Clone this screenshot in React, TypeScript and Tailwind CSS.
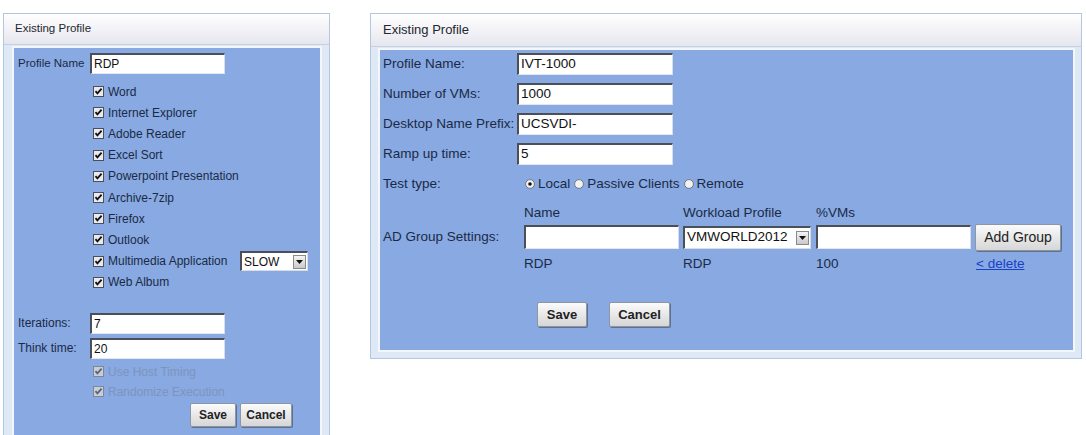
import React from "react";

const font = { fontFamily: '"Liberation Sans", Arial, sans-serif' };

function Check({ disabled }: { disabled?: boolean }) {
    return (
        <svg width="11" height="11" viewBox="0 0 11 11" className="shrink-0">
            <rect x="0.5" y="0.5" width="10" height="10" fill={disabled ? "#c9cdd6" : "#e9e9ee"} stroke={disabled ? "#7d879c" : "#4a4f5a"} />
            <path d="M2.5 5.2 L4.4 7.4 L8.6 2.6" fill="none" stroke={disabled ? "#5d6475" : "#111"} strokeWidth="1.8" />
        </svg>
    );
}

function Radio({ on }: { on?: boolean }) {
    return (
        <svg width="10" height="10" viewBox="0 0 10 10" className="shrink-0">
            <circle cx="5" cy="5" r="4.4" fill="#f2f2f2" stroke="#6b6f78" strokeWidth="0.9" />
            {on && <circle cx="5" cy="5" r="1.8" fill="#111" />}
        </svg>
    );
}

function TextBox({ value, className }: { value?: string; className: string }) {
    return (
        <div className={`bg-white border-t-2 border-l-2 border-r border-b border-t-[#4b4f58] border-l-[#4b4f58] border-r-[#d8dce4] border-b-[#e4e8ee] flex items-center pl-[2px] text-[#111] ${className}`}>
            {value}
        </div>
    );
}

function Select({ value, className }: { value: string; className: string }) {
    return (
        <div className={`bg-white border-t-2 border-l-2 border-r border-b border-t-[#4b4f58] border-l-[#4b4f58] border-r-[#d8dce4] border-b-[#d8dce4] flex items-center justify-between pl-[2px] pr-[1px] text-[#111] ${className}`}>
            <span>{value}</span>
            <span className="w-[13px] h-[14px] bg-gradient-to-b from-[#f4f4f4] to-[#c9c9c9] border border-[#8a8a8a] flex items-center justify-center">
                <svg width="7" height="4" viewBox="0 0 7 4"><path d="M0 0 H7 L3.5 4 Z" fill="#111" /></svg>
            </span>
        </div>
    );
}

function Button({ label, className }: { label: string; className: string }) {
    return (
        <div className={`bg-gradient-to-b from-[#fbfbfb] to-[#d6d6d6] border border-[#8f96a3] rounded-[2px] flex items-center justify-center text-[#222] shadow-[1px_1px_0_#5f6f90] ${className}`}>
            {label}
        </div>
    );
}

const leftItems = [
    "Word",
    "Internet Explorer",
    "Adobe Reader",
    "Excel Sort",
    "Powerpoint Presentation",
    "Archive-7zip",
    "Firefox",
    "Outlook",
    "Multimedia Application",
    "Web Album",
];

export default function App() {
    return (
        <div className="w-[1086px] h-[435px] bg-white overflow-hidden flex items-start pt-[13px] pl-[3px]" style={font}>
            {/* left panel */}
            <div className="w-[327px] h-[430px] border border-[#b3c6e2] bg-[#dfe8f5] flex flex-col">
                <div className="h-[31px] shrink-0 bg-gradient-to-b from-white to-[#e6e6ef] border-b border-[#c7cfe0] flex items-center pl-[11px] text-[11.5px] text-[#23272f]">
                    Existing Profile
                </div>
                <div className="mt-[1px] ml-[8px] mr-[7px] flex-1 border-2 border-[#f3f6fb] bg-[#88a9e1] text-[12px] text-[#1b2947] pl-[4px] pt-[5px]">
                    <div className="flex items-center h-[21px]">
                        <span className="w-[72px] text-[11.5px]">Profile Name</span>
                        <TextBox value="RDP" className="w-[135px] h-[21px] text-[12px]" />
                    </div>
                    <div className="mt-[7px] flex flex-col">
                        {leftItems.map((item) => (
                            <div key={item} className="h-[21.2px] flex items-center pl-[75px] gap-[4px]">
                                <Check />
                                <span className="w-[128px] whitespace-nowrap">{item}</span>
                                {item === "Multimedia Application" && (
                                    <Select value="SLOW" className="w-[68px] h-[20px] text-[12px]" />
                                )}
                            </div>
                        ))}
                    </div>
                    <div className="mt-[20px] flex items-center h-[21px]">
                        <span className="w-[72px]">Iterations:</span>
                        <TextBox value="7" className="w-[135px] h-[21px] text-[12px]" />
                    </div>
                    <div className="mt-[4px] flex items-center h-[21px]">
                        <span className="w-[72px]">Think time:</span>
                        <TextBox value="20" className="w-[135px] h-[21px] text-[12px]" />
                    </div>
                    <div className="mt-[3px] h-[20px] flex items-center pl-[75px] gap-[4px] text-[#7f93bd]">
                        <Check disabled />
                        <span>Use Host Timing</span>
                    </div>
                    <div className="h-[20px] flex items-center pl-[75px] gap-[4px] text-[#7f93bd]">
                        <Check disabled />
                        <span>Randomize Execution</span>
                    </div>
                    <div className="mt-[1px] flex pl-[172px] gap-[4px]">
                        <Button label="Save" className="w-[46px] h-[24px] text-[12px] font-bold" />
                        <Button label="Cancel" className="w-[52px] h-[24px] text-[12px] font-bold" />
                    </div>
                </div>
            </div>

            {/* right panel */}
            <div className="ml-[40px] w-[712px] h-[346px] border border-[#b3c6e2] bg-[#dfe8f5] flex flex-col">
                <div className="h-[33px] shrink-0 bg-gradient-to-b from-white to-[#e6e6ef] border-b border-[#c7cfe0] flex items-center pl-[12px] text-[13px] text-[#23272f]">
                    Existing Profile
                </div>
                <div className="mt-[1px] ml-[7px] mr-[6px] mb-[6px] flex-1 border-2 border-[#f3f6fb] bg-[#88a9e1] text-[13.5px] text-[#1b2947] pl-[3px] pt-[3px]">
                    {[
                        ["Profile Name:", "IVT-1000"],
                        ["Number of VMs:", "1000"],
                        ["Desktop Name Prefix:", "UCSVDI-"],
                        ["Ramp up time:", "5"],
                    ].map(([label, value], i) => (
                        <div key={label} className={`flex items-center h-[22px] ${i > 0 ? "mt-[8px]" : ""}`}>
                            <span className="w-[134px] whitespace-nowrap">{label}</span>
                            <TextBox value={value} className="w-[156px] h-[22px] text-[13.5px]" />
                        </div>
                    ))}
                    <div className="mt-[8px] flex items-center h-[22px] whitespace-nowrap">
                        <span className="w-[142px]">Test type:</span>
                        <span className="flex items-center gap-[3px]"><Radio on />Local</span>
                        <span className="flex items-center gap-[3px] ml-[4px]"><Radio />Passive Clients</span>
                        <span className="flex items-center gap-[3px] ml-[4px]"><Radio />Remote</span>
                    </div>
                    <div className="mt-[8px] flex items-center h-[20px]">
                        <span className="w-[141px]"></span>
                        <span className="w-[159px]">Name</span>
                        <span className="w-[133px]">Workload Profile</span>
                        <span>%VMs</span>
                    </div>
                    <div className="flex items-center h-[28px]">
                        <span className="w-[141px]">AD Group Settings:</span>
                        <TextBox className="w-[155px] h-[24px]" />
                        <Select value="VMWORLD2012" className="ml-[4px] w-[128px] h-[23px] text-[13.5px]" />
                        <TextBox className="ml-[5px] w-[155px] h-[24px]" />
                        <Button label="Add Group" className="ml-[4px] w-[86px] h-[27px] text-[14px]" />
                    </div>
                    <div className="mt-[3px] flex items-center h-[20px]">
                        <span className="w-[141px]"></span>
                        <span className="w-[159px]">RDP</span>
                        <span className="w-[133px]">RDP</span>
                        <span className="w-[160px]">100</span>
                        <span className="text-[#1a3fc9] underline">&lt; delete</span>
                    </div>
                    <div className="mt-[28px] flex items-center pl-[154px]">
                        <Button label="Save" className="w-[50px] h-[25px] text-[13px] font-bold" />
                        <Button label="Cancel" className="ml-[22px] w-[61px] h-[25px] text-[13px] font-bold" />
                    </div>
                </div>
            </div>
        </div>
    );
}
